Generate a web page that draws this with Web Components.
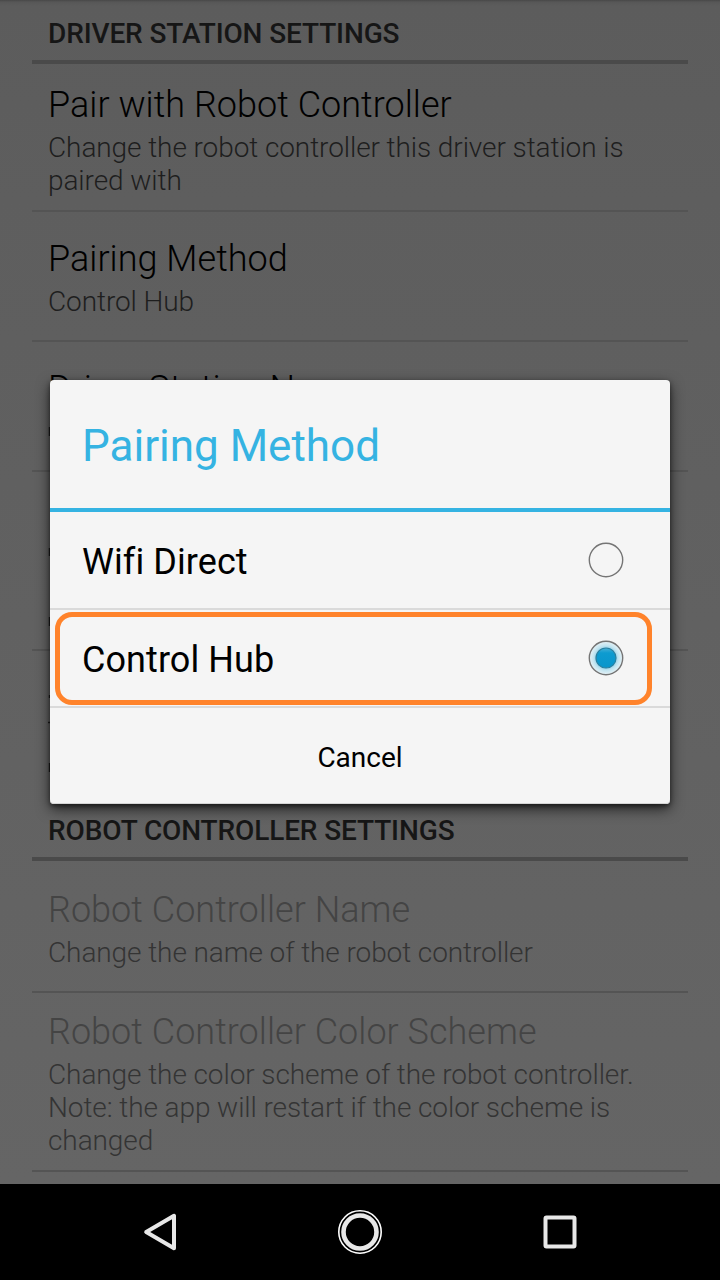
<!DOCTYPE html>
<html lang="en"><head><meta charset="utf-8"><title>Settings</title>
<style>html,body{margin:0;height:100%;background:#000;overflow:hidden}body{font-family:Roboto,"Liberation Sans",sans-serif}</style></head>
<body><settings-app></settings-app>
<script>
const define=(name,css,html)=>customElements.define(name,class extends HTMLElement{
  constructor(){super();this.attachShadow({mode:'open'}).innerHTML=`<style>*{box-sizing:border-box}${css}</style>${html}`;}
});

define('pref-header',`:host{display:block;box-sizing:border-box;height:64px;margin:0 32px;padding:17px 16px 0;border-bottom:4px solid #4a4a4a;font-size:28px;line-height:33px;font-weight:500;letter-spacing:-.12px;color:#161616;white-space:nowrap}`,`<slot></slot>`);

define('pref-item',`:host{display:block;box-sizing:border-box;height:var(--h,130px);margin:0 32px;padding:var(--top,20px) 16px 0;border-bottom:2px solid #545454;font-weight:300;overflow:hidden}
.title{font-size:36px;line-height:42px;color:#000;white-space:nowrap;letter-spacing:.03px}
.summary{font-size:28px;line-height:33px;color:#1e1e1e;padding-top:5px;letter-spacing:-.09px}
:host([disabled]) .title{color:#444}:host([disabled]) .summary{color:#343434}`,
`<div class="title"><slot name="title"></slot></div><div class="summary"><slot></slot></div>`);

define('radio-mark',`:host{display:block;width:36px;height:36px}svg{display:block}.on{display:none}:host([checked]) .on{display:inline}`,
`<svg width="36" height="36" viewBox="0 0 36 36"><defs>
<radialGradient id="halo"><stop offset=".55" stop-color="#8ecde6"/><stop offset=".76" stop-color="#c3e5f1"/><stop offset="1" stop-color="#e6f1f5"/></radialGradient>
<linearGradient id="dot" x2="0" y2="1"><stop stop-color="#47b0d6"/><stop offset=".25" stop-color="#0d9bd0"/><stop offset="1" stop-color="#0895cb"/></linearGradient></defs>
<circle class="on" cx="18" cy="18" r="16.5" fill="url(#halo)"/>
<circle cx="18" cy="18" r="16.7" fill="none" stroke="#757575" stroke-width="1.4"/>
<circle class="on" cx="18" cy="18" r="10" fill="url(#dot)" stroke="#287f9f" stroke-width="1.2"/></svg>`);

define('choice-row',`:host{display:flex;box-sizing:border-box;position:relative;height:98px;padding:0 46px 0 32px;align-items:center;justify-content:space-between;border-bottom:2px solid #dadada;font-size:36px;line-height:42px;color:#000}
.ring{display:none;position:absolute;left:5px;right:18px;top:2px;height:93px;border:5px solid #ff832b;border-radius:17px}
:host([marked]) .ring{display:block}.label{padding-top:4px;letter-spacing:.08px}`,
`<span class="label"><slot></slot></span><slot name="mark"></slot><div class="ring"></div>`);

define('choice-dialog',`:host{display:block;box-sizing:border-box;width:620px;height:424px;background:#f5f5f5;border-radius:4px;box-shadow:0 5px 14px rgba(0,0,0,.65),0 2px 4px rgba(0,0,0,.45), inset 0 -1px #d5d5d5}
.title{height:132px;padding:40px 32px 0;border-bottom:4px solid #35b3e2;color:#35b3e2;font-size:44px;line-height:52px}
.action{height:96px;display:flex;align-items:center;justify-content:center;font-size:28px;color:#000;padding-top:2px}`,
`<div class="title"><slot name="title"></slot></div><slot></slot><div class="action"><slot name="action"></slot></div>`);

define('nav-bar',`:host{display:flex;height:96px;background:#000;justify-content:center;gap:152px;align-items:center}svg{display:block}`,
`<svg width="48" height="48" viewBox="0 0 48 48"><path d="M38 7.8v32.4L10.2 24Z" fill="none" stroke="#e8e8e8" stroke-width="4" stroke-linejoin="round"/></svg>
<svg width="48" height="48" viewBox="0 0 48 48" fill="none"><circle cx="24" cy="24" r="21.2" stroke="#fff" stroke-width="1.6"/><circle cx="24" cy="24" r="16.5" stroke="#e8e8e8" stroke-width="4.6"/></svg>
<svg width="48" height="48" viewBox="0 0 48 48"><rect x="9.5" y="9.5" width="29" height="29" rx="1" fill="none" stroke="#e8e8e8" stroke-width="4"/></svg>`);

define('settings-app',`:host{display:flex;flex-direction:column;position:relative;width:720px;height:1280px;overflow:hidden}
.list{height:1184px;overflow:hidden;background:linear-gradient(#484848 0,#575757 2px,#5c5c5c 6px,#5e5e5e 200px,#656565 1184px)}
.edges{position:absolute;left:48px;top:380px}
choice-dialog{position:absolute;left:50px;top:380px}`,
`<div class="list">
<pref-header>DRIVER STATION SETTINGS</pref-header>
<pref-item style="--h:148px"><span slot="title">Pair with Robot Controller</span>Change the robot controller this driver station is paired with</pref-item>
<pref-item style="--top:26px"><span slot="title">Pairing Method</span>Control Hub</pref-item>
<pref-item style="--top:26px"><span slot="title">Driver Station Name</span></pref-item>
<pref-item style="--h:179px"></pref-item>
<pref-item style="--h:146px;border-color:transparent"></pref-item>
<pref-header>ROBOT CONTROLLER SETTINGS</pref-header>
<pref-item disabled style="--h:132px;--top:28px"><span slot="title">Robot Controller Name</span>Change the name of the robot controller</pref-item>
<pref-item disabled style="--h:179px;--top:18px"><span slot="title">Robot Controller Color Scheme</span>Change the color scheme of the robot controller. Note: the app will restart if the color scheme is changed</pref-item>
</div>
<!-- edges of the rows that show past the dialog's left side -->
<svg class="edges" width="4" height="424" viewBox="0 0 4 424"><path d="M1.5 47v9M1.5 168v8M1.5 237v9M1.5 315v3M0 342.500h3M1.500 383v9" stroke="#1e1e1e" stroke-width="1.4" fill="none"/></svg>
<nav-bar></nav-bar>
<choice-dialog><span slot="title">Pairing Method</span>
<choice-row>Wifi Direct<radio-mark slot="mark"></radio-mark></choice-row>
<choice-row marked>Control Hub<radio-mark slot="mark" checked></radio-mark></choice-row>
<span slot="action">Cancel</span></choice-dialog>`);
</script></body></html>
